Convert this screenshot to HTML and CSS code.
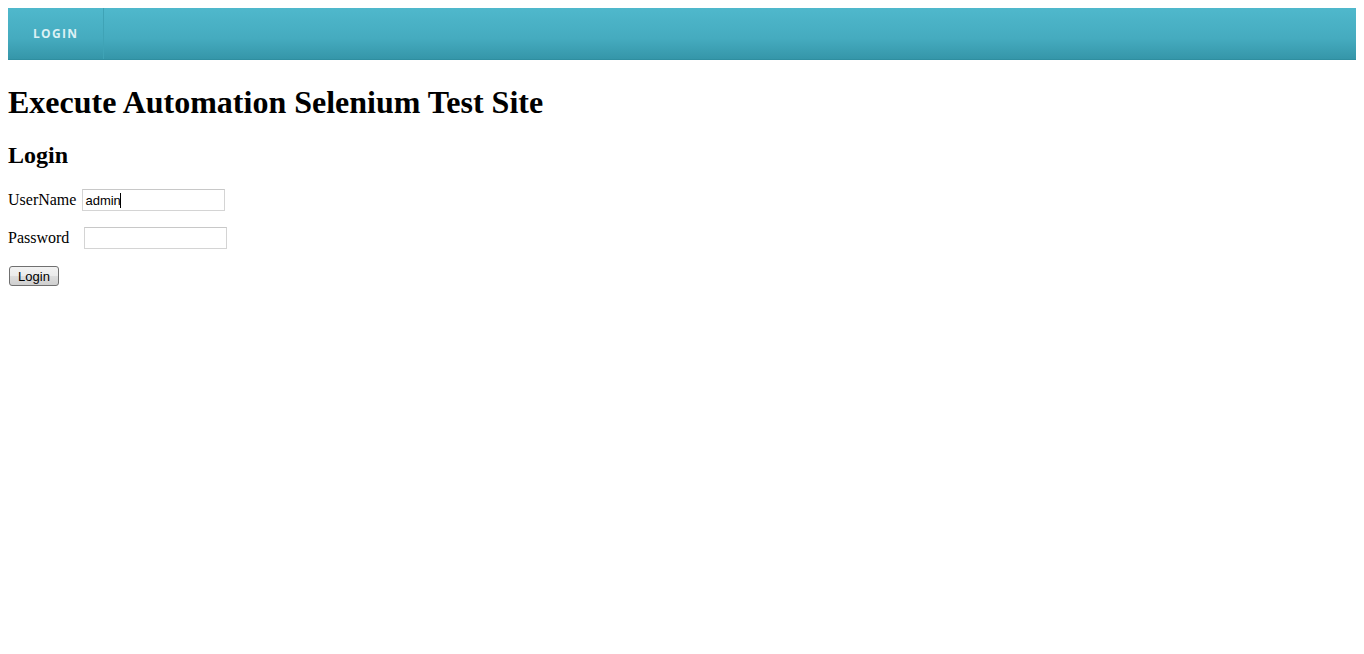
FILE: index.html
```html
<!DOCTYPE html>
<html>
<head>
<meta charset="utf-8">
<title>Execute Automation</title>
<link rel="stylesheet" href="styles.css">
</head>
<body>
<nav class="navbar">
  <a class="nav-item" href="#">LOGIN</a>
</nav>
<h1 class="title">Execute Automation Selenium Test Site</h1>
<h2 class="subtitle">Login</h2>
<form class="login-form">
  <p class="row"><label class="label label-user">UserName</label><span class="field"><input class="text-input" type="text" value="admin"><span class="caret"></span></span></p>
  <p class="row"><label class="label label-pass">Password</label><span class="field"><input class="text-input" type="password"></span></p>
  <p class="row"><button class="btn" type="button">Login</button></p>
</form>
</body>
</html>
```
FILE: styles.css
```css
body {
  margin: 8px;
  font-family: "Liberation Serif", "Times New Roman", serif;
  font-size: 16px;
  color: #000;
  background: #fff;
}
.navbar {
  display: flex;
  height: 52px;
  background: linear-gradient(to bottom, #4fb8cc 0%, #45abbf 60%, #3596a9 100%);
  border-bottom: 1px solid #2f8ea0;
  box-sizing: border-box;
}
.nav-item {
  display: flex;
  align-items: center;
  width: 96px;
  box-sizing: border-box;
  padding-left: 25px;
  font-family: "Open Sans", sans-serif;
  font-weight: 700;
  font-size: 12px;
  letter-spacing: 1.3px;
  color: #dcf1f5;
  text-decoration: none;
  border-right: 1px solid #3fa3b6;
}
.title {
  font-size: 32px;
  margin: 24px 0 21px;
}
.subtitle {
  font-size: 24px;
  margin: 20px 0;
}
.row {
  margin: 16px 0;
  display: flex;
  align-items: center;
  height: 22px;
}
.label-user { margin-right: 6px; }
.label-pass { margin-right: 15px; }
.field {
  position: relative;
  display: inline-block;
}
.text-input {
  width: 143px;
  height: 22px;
  box-sizing: border-box;
  border: 1px solid #d4d4d4;
  border-top-color: #c8c8c8;
  padding: 1px 2px;
  font-family: "Liberation Sans", Arial, sans-serif;
  font-size: 13px;
  color: #000;
  outline: none;
  margin: 0;
}
.caret {
  position: absolute;
  left: 38px;
  top: 4px;
  width: 1px;
  height: 15px;
  background: #000;
}
.btn {
  margin-left: 1px;
  width: 50px;
  height: 20px;
  padding: 0;
  font-family: "Liberation Sans", Arial, sans-serif;
  font-size: 13px;
  color: #000;
  border: 1px solid #707070;
  border-radius: 3px;
  background: linear-gradient(to bottom, #f2f2f2 0%, #ebebeb 50%, #dddddd 51%, #cfcfcf 100%);
}
```
